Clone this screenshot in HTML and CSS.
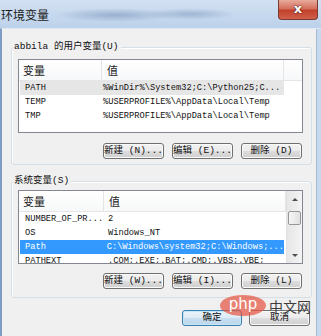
FILE: index.html
```html
<!DOCTYPE html>
<html lang="zh-CN">
<head>
  <meta charset="UTF-8" />
  <title>环境变量</title>
  <link rel="stylesheet" href="styles.css">
</head>
<body>
  <div class="window">
    <div class="titlebar">
      <span class="title">环境变量</span>
      <span class="close">x</span>
    </div>
    <div class="frame">
      <div class="client">

        <div class="group group-user">
          <div class="group-title">abbila 的用户变量(U)</div>
          <div class="list">
            <div class="list-main">
              <div class="list-head">
                <span class="head-name">变量</span>
                <span class="head-value">值</span>
              </div>
              <div class="row inactive">
                <span class="cell-name">PATH</span>
                <span class="cell-value">%WinDir%\System32;C:\Python25;C...</span>
              </div>
              <div class="row">
                <span class="cell-name">TEMP</span>
                <span class="cell-value">%USERPROFILE%\AppData\Local\Temp</span>
              </div>
              <div class="row">
                <span class="cell-name">TMP</span>
                <span class="cell-value">%USERPROFILE%\AppData\Local\Temp</span>
              </div>
            </div>
          </div>
          <div class="actions">
            <button class="btn">新建 (N)...</button>
            <button class="btn">编辑 (E)...</button>
            <button class="btn">删除 (D)</button>
          </div>
        </div>

        <div class="group group-system">
          <div class="group-title">系统变量(S)</div>
          <div class="list">
            <div class="list-main">
              <div class="list-head">
                <span class="head-name">变量</span>
                <span class="head-value">值</span>
              </div>
              <div class="row">
                <span class="cell-name">NUMBER_OF_PR...</span>
                <span class="cell-value">2</span>
              </div>
              <div class="row">
                <span class="cell-name">OS</span>
                <span class="cell-value">Windows_NT</span>
              </div>
              <div class="row selected">
                <span class="cell-name">Path</span>
                <span class="cell-value">C:\Windows\system32;C:\Windows;...</span>
              </div>
              <div class="row">
                <span class="cell-name">PATHEXT</span>
                <span class="cell-value">.COM;.EXE;.BAT;.CMD;.VBS;.VBE;</span>
              </div>
            </div>
            <div class="scrollbar">
              <div class="sb-btn"><span class="arrow-up"></span></div>
              <div class="sb-thumb"></div>
              <div class="sb-track"></div>
              <div class="sb-btn"><span class="arrow-down"></span></div>
            </div>
          </div>
          <div class="actions">
            <button class="btn">新建 (W)...</button>
            <button class="btn">编辑 (I)...</button>
            <button class="btn">删除 (L)</button>
          </div>
        </div>

        <div class="footer">
          <button class="btn btn-default">确定</button>
          <button class="btn btn-cancel">取消</button>
        </div>

      </div>
    </div>

    <div class="watermark">
      <span class="php-logo">php</span>
      <span class="php-text">中文网</span>
    </div>
  </div>
</body>
</html>
```

FILE: styles.css
```css
body {
  margin: 0;
  width: 321px;
  height: 336px;
  overflow: hidden;
  font-family: "Noto Sans CJK SC", sans-serif;
  font-size: 10px;
  color: #000;
}

.window {
  position: relative;
  width: 321px;
  height: 336px;
  display: flex;
  flex-direction: column;
  background: #c6d8ed;
}

/* title bar */
.titlebar {
  height: 28px;
  display: flex;
  align-items: flex-start;
  background:
    radial-gradient(ellipse 60px 7px at 115px 15px, rgba(85, 115, 160, 0.4), transparent),
    radial-gradient(ellipse 45px 6px at 190px 14px, rgba(85, 115, 160, 0.35), transparent),
    linear-gradient(#d2e1f2, #bcd1ea);
}

.title {
  margin: 6px 0 0 1px;
  font-size: 12px;
  line-height: 17px;
  color: #1a1a1a;
}

.close {
  margin-left: auto;
  margin-right: 3px;
  width: 38px;
  height: 19px;
  border: 1px solid #7a3a30;
  border-top: none;
  border-radius: 0 0 4px 4px;
  background: linear-gradient(#e8aa9c, #d4705e 45%, #c2412b 55%, #d0614c);
  color: #fff;
  font-family: "DejaVu Sans", sans-serif;
  font-weight: bold;
  font-size: 13px;
  line-height: 17px;
  text-align: center;
  text-shadow: 0 0 2px #4a1a12, 0 0 1px #4a1a12;
}

/* window body */
.frame {
  flex: 1;
  display: flex;
  border-left: 2px solid #7f9dc4;
  padding-right: 7px;
  border-top: 1px solid #dfe8f2;
}

.client {
  flex: 1;
  display: flex;
  flex-direction: column;
  background: #f0f0f0;
  border-right: 1px solid #a6bbd6;
}

/* group boxes */
.group {
  display: flex;
  flex-direction: column;
  margin: 18px 4px 0 9px;
  padding: 0 8px 5px 6px;
  border: 1px solid #d5dfe5;
  border-radius: 3px;
  box-shadow: inset 1px 1px 0 #fff;
}

.group-system {
  margin-top: 16px;
  padding-bottom: 8px;
}

.group-title {
  align-self: flex-start;
  margin: -8px 0 0 -5px;
  padding: 0 2px 0 1px;
  height: 14px;
  line-height: 14px;
  background: #f0f0f0;
  font-family: "Liberation Mono", "Noto Sans CJK SC", monospace;
  font-size: 9.5px;
  color: #111;
}

/* list views */
.list {
  display: flex;
  height: 74px;
  margin-top: 5px;
  border: 1px solid #828790;
  background: #fff;
  overflow: hidden;
  box-sizing: border-box;
}

.group-system .list {
  margin-top: 2px;
}

.list-main {
  flex: 1;
  overflow: hidden;
}

.list-head {
  display: flex;
  height: 20px;
  border-bottom: 1px solid #e5e5e5;
  background: linear-gradient(#fff, #f7f8f9);
  font-size: 11px;
  line-height: 20px;
  color: #222;
}

.head-name {
  width: 78px;
  padding-left: 4px;
  border-right: 1px solid #e5e5e5;
}

.head-value {
  width: 176px;
  padding-left: 5px;
  border-right: 1px solid #e5e5e5;
}

.group-system .head-name {
  width: 80px;
}

.row {
  display: flex;
  width: 264px;
  height: 14px;
  margin-left: 1px;
  line-height: 14px;
  font-family: "Liberation Mono", monospace;
  font-size: 8.7px;
  color: #111;
  white-space: nowrap;
}

.row.inactive {
  background: #e6e6e6;
}

.row.selected {
  background: #3399ff;
  color: #fff;
}

.cell-name {
  width: 80px;
  padding-left: 5px;
  box-sizing: border-box;
}

.cell-value {
  padding-left: 3px;
}

.group-system .cell-name {
  width: 83px;
}

.group-system .cell-value {
  padding-left: 5px;
}

/* scrollbar */
.scrollbar {
  width: 15px;
  display: flex;
  flex-direction: column;
  background: linear-gradient(90deg, #e6e6e6, #f4f4f4);
  border-left: 1px solid #e2e2e2;
}

.sb-btn {
  height: 16px;
  display: flex;
  align-items: center;
  justify-content: center;
}

.arrow-up,
.arrow-down {
  width: 0;
  height: 0;
  border-left: 3px solid transparent;
  border-right: 3px solid transparent;
}

.arrow-up {
  border-bottom: 3px solid #4d4d4d;
}

.arrow-down {
  border-top: 3px solid #4d4d4d;
}

.sb-thumb {
  height: 12px;
  margin: 4px 1px 0;
  border: 1px solid #979797;
  border-radius: 2px;
  background: linear-gradient(90deg, #f6f6f6, #e1e1e1);
}

.sb-track {
  flex: 1;
}

/* buttons */
.actions {
  display: flex;
  justify-content: flex-end;
  gap: 8px;
  margin: 10px 1px 0 0;
}

.group-system .actions {
  margin-top: 9px;
}

.btn {
  width: 61px;
  height: 16px;
  padding: 0;
  border: 1px solid #707070;
  border-radius: 3px;
  background: linear-gradient(#f2f2f2, #ebebeb 50%, #dddddd 51%, #cfcfcf);
  box-shadow: inset 0 0 0 1px #fbfbfb;
  font-family: "Liberation Mono", "Noto Sans CJK SC", monospace;
  font-size: 9.5px;
  line-height: 14px;
  color: #111;
  white-space: nowrap;
}

.footer {
  display: flex;
  justify-content: flex-end;
  gap: 7px;
  margin: 12px 6px 0 0;
}

.btn-default {
  width: 60px;
  border-color: #3c7fb1;
  background: linear-gradient(#eaf4fb, #dcebf6 50%, #c9dff0 51%, #bcd6ec);
  box-shadow: inset 0 0 0 1px #c4e6f8;
}

/* site watermark */
.watermark {
  position: absolute;
  left: 220px;
  top: 295px;
  display: flex;
  align-items: center;
  gap: 3px;
}

.php-logo {
  width: 46px;
  height: 21px;
  border-radius: 50%;
  background: rgba(228, 86, 66, 0.72);
  color: #fff;
  font-family: "DejaVu Sans", sans-serif;
  font-size: 15px;
  line-height: 19px;
  text-align: center;
}

.php-text {
  font-size: 14px;
  line-height: 18px;
  color: #3e3e3e;
}
```
